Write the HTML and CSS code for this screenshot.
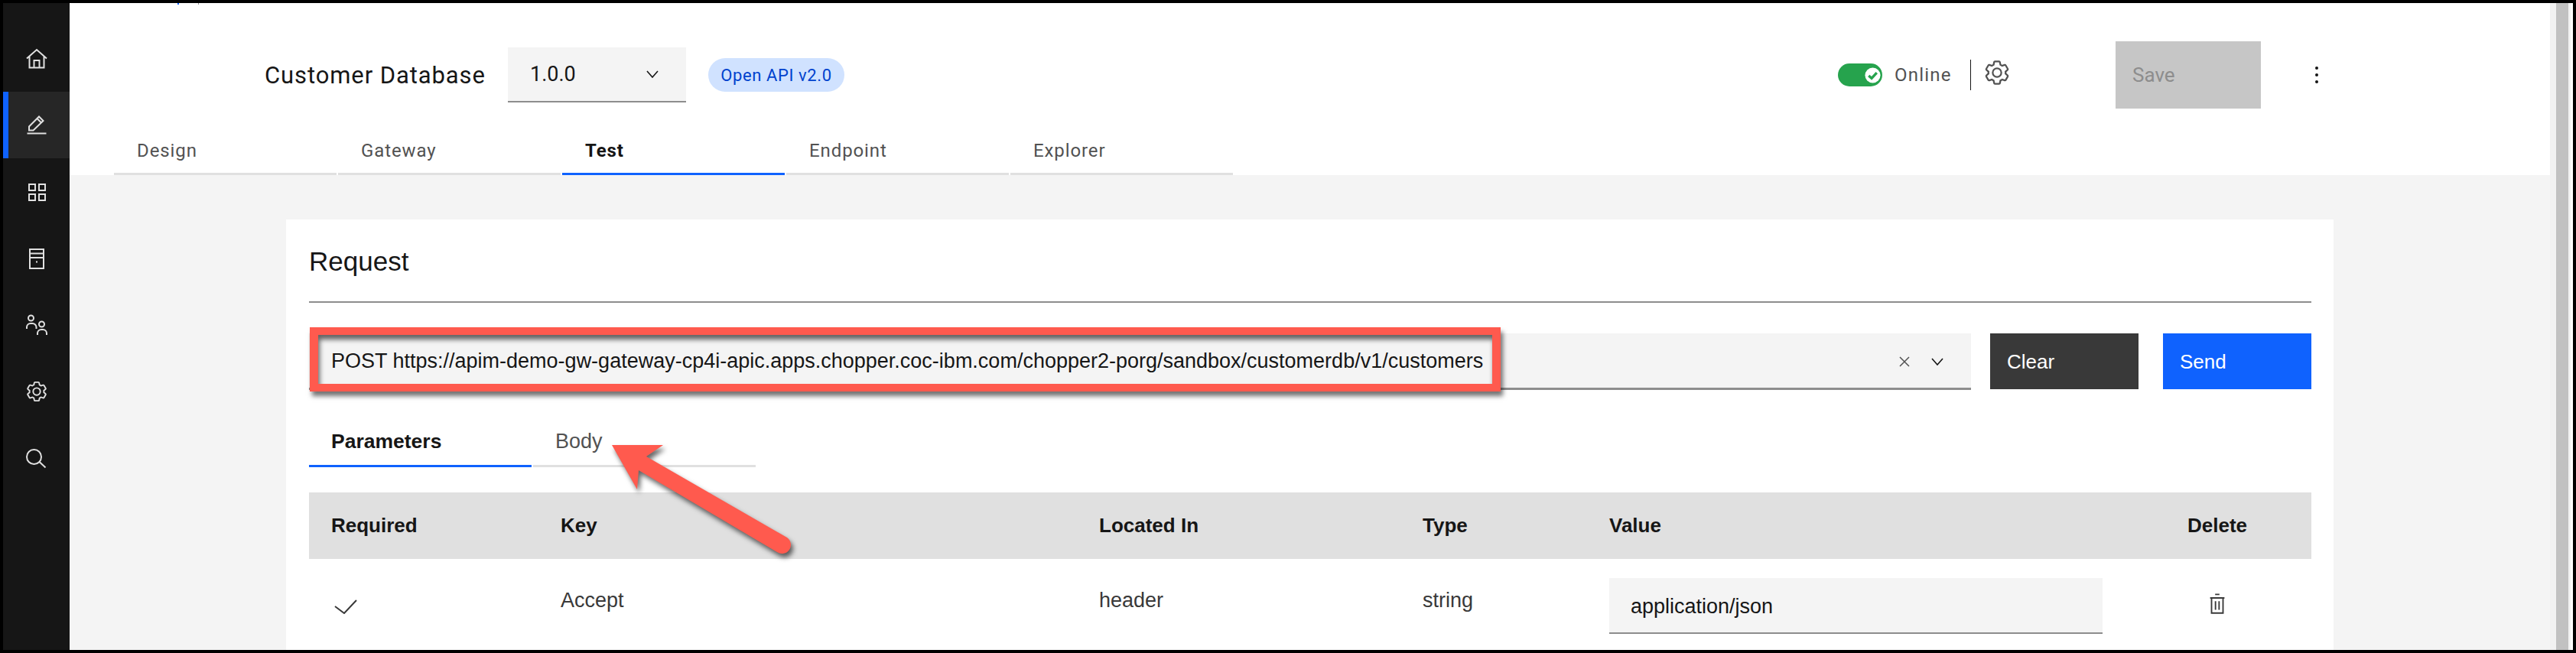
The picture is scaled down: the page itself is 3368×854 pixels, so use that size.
FILE: index.html
```html
<!DOCTYPE html>
<html lang="en">
<head>
  <meta charset="UTF-8" />
  <title>Customer Database</title>
  <link rel="stylesheet" href="styles.css">
</head>
<body>

  <svg class="defs" width="0" height="0">
    <symbol id="gear" viewBox="0 0 32 32">
      <path d="M27,16.76c0-.25,0-.5,0-.76s0-.51,0-.77l1.92-1.68A2,2,0,0,0,29.3,11L26.94,7a2,2,0,0,0-1.73-1,2,2,0,0,0-.64.1l-2.43.82a11.35,11.35,0,0,0-1.31-.75l-.51-2.52a2,2,0,0,0-2-1.61H13.64a2,2,0,0,0-2,1.61l-.51,2.52a11.48,11.48,0,0,0-1.32.75L7.43,6.06A2,2,0,0,0,6.79,6,2,2,0,0,0,5.06,7L2.7,11a2,2,0,0,0,.41,2.51L5,15.24c0,.25,0,.5,0,.76s0,.51,0,.77L3.11,18.45A2,2,0,0,0,2.7,21L5.06,25a2,2,0,0,0,1.73,1,2,2,0,0,0,.64-.1l2.43-.82a11.35,11.35,0,0,0,1.31.75l.51,2.52a2,2,0,0,0,2,1.61h4.72a2,2,0,0,0,2-1.61l.51-2.52a11.48,11.48,0,0,0,1.32-.75l2.42.82a2,2,0,0,0,.64.1,2,2,0,0,0,1.73-1L29.3,21a2,2,0,0,0-.41-2.51ZM25.21,24l-3.43-1.16a8.86,8.86,0,0,1-2.71,1.57L18.36,28H13.64l-.71-3.55a9.36,9.36,0,0,1-2.7-1.57L6.79,24,4.43,20l2.72-2.4a8.9,8.9,0,0,1,0-3.13L4.43,12,6.79,8l3.43,1.16a8.86,8.86,0,0,1,2.71-1.57L13.64,4h4.72l.71,3.55a9.36,9.36,0,0,1,2.7,1.57L25.21,8l2.36,4-2.72,2.4a8.9,8.9,0,0,1,0,3.13L27.57,20Z"/>
      <path d="M16,22a6,6,0,1,1,6-6A5.94,5.94,0,0,1,16,22Zm0-10a3.91,3.91,0,0,0-4,4,3.91,3.91,0,0,0,4,4,3.91,3.91,0,0,0,4-4A3.91,3.91,0,0,0,16,12Z"/>
    </symbol>
  </svg>

  <!-- Left rail -->
  <nav class="rail">
    <div class="rail-item">
      <svg class="rail-icon" viewBox="0 0 32 32"><path d="M3 15.500 16 4l13 11.500M6.500 13v14.500h19V13M12.500 27.500V18h7v9.500"/></svg>
    </div>
    <div class="rail-item active">
      <svg class="rail-icon" viewBox="0 0 32 32"><path d="M3.500 26.500h25M6 22.500v-5L19 4.500l5.500 5.500-13 12.500zM16.500 7l5.500 5.500"/></svg>
    </div>
    <div class="rail-item">
      <svg class="rail-icon" viewBox="0 0 32 32"><path d="M6 6h8v8H6zM19 6h8v8h-8zM6 19h8v8H6zM19 19h8v8h-8z"/></svg>
    </div>
    <div class="rail-item">
      <svg class="rail-icon" viewBox="0 0 32 32"><path d="M7 4h18v25H7zM7 9.500h18M7 15h18M15 20.500h2"/></svg>
    </div>
    <div class="rail-item">
      <svg class="rail-icon" viewBox="0 0 32 32"><circle cx="8.500" cy="7" r="3.500"/><circle cx="22.500" cy="15" r="3.500"/><path d="M3 21v-2a5 5 0 0 1 5-5h2.500a5 5 0 0 1 5 5v2M17 29v-2a5 5 0 0 1 5-5h2a5 5 0 0 1 5 5v2"/></svg>
    </div>
    <div class="rail-item">
      <svg class="gear-rail" viewBox="0 0 32 32"><use href="#gear"/></svg>
    </div>
    <div class="rail-item">
      <svg class="rail-icon" viewBox="0 0 32 32"><circle cx="12.500" cy="14.500" r="9.500"/><path d="m19.500 21 8 7.500"/></svg>
    </div>
  </nav>

  <div class="main">
    <header class="top">
      <div class="crumb-stub"><span class="stub-blue"></span><span class="stub-grey"></span></div>
      <div class="title-row">
        <div class="api-name">Customer Database</div>
        <div class="version">
          <span>1.0.0</span>
          <svg class="chevron" viewBox="0 0 16 10"><path d="M1 1l7 8 7-8"/></svg>
        </div>
        <div class="tag">Open API v2.0</div>
        <div class="status">
          <div class="toggle">
            <svg class="toggle-knob" viewBox="0 0 24 24"><circle cx="12" cy="12" r="10.500"/><path d="M6.500 12.500l4 3.500 7-7.500"/></svg>
          </div>
          <span class="online">Online</span>
          <span class="divider"></span>
          <svg class="gear-top" viewBox="0 0 32 32"><use href="#gear"/></svg>
        </div>
        <button class="save">Save</button>
        <div class="more"><i></i><i></i><i></i></div>
      </div>
      <div class="tabs top-tabs">
        <div class="tab">Design</div>
        <div class="tab">Gateway</div>
        <div class="tab current">Test</div>
        <div class="tab">Endpoint</div>
        <div class="tab">Explorer</div>
      </div>
    </header>

    <section class="content">
      <div class="card">
        <h2 class="card-title">Request</h2>
        <div class="url-row">
          <div class="url-field">
            <span>POST https://apim-demo-gw-gateway-cp4i-apic.apps.chopper.coc-ibm.com/chopper2-porg/sandbox/customerdb/v1/customers</span>
            <svg class="clear-x" viewBox="0 0 16 16"><path d="M2 2l12 12M14 2 2 14"/></svg>
            <svg class="chevron" viewBox="0 0 16 10"><path d="M1 1l7 8 7-8"/></svg>
          </div>
          <button class="btn btn-dark">Clear</button>
          <button class="btn btn-blue">Send</button>
        </div>
        <div class="tabs card-tabs">
          <div class="tab current">Parameters</div>
          <div class="tab">Body</div>
        </div>
        <div class="grid-row grid-head">
          <div>Required</div>
          <div>Key</div>
          <div>Located In</div>
          <div>Type</div>
          <div>Value</div>
          <div>Delete</div>
        </div>
        <div class="grid-row grid-body">
          <div class="cell-check"><svg class="check" viewBox="0 0 30 19"><path d="M1 9l12 9L29 1"/></svg></div>
          <div>Accept</div>
          <div>header</div>
          <div>string</div>
          <div class="value-input">application/json</div>
          <div class="cell-trash">
            <svg class="trash" viewBox="0 0 32 32"><path d="M13 2.500h6M6 7.500h20M8 7.500v21h16v-21M13.500 12v12M18.500 12v12"/></svg>
          </div>
        </div>
      </div>
    </section>
  </div>

  <div class="scroller"></div>

  <!-- Annotation drawn on top of the screenshot -->
  <div class="callout-box"></div>
  <svg class="callout-arrow" viewBox="0 0 260 170">
    <path d="M10 12H77L55 27 239 133a11.500 11.500 0 0 1-13 19L45 45 43 70z"/>
  </svg>

</body>
</html>
```

FILE: styles.css
```css
:root {
  --blue: #0f62fe;
  --rail: #161616;
  --page: #f4f4f4;
  --line: #e0e0e0;
  --under: #8d8d8d;
  --red: #ff5a4e;
}
* {
  box-sizing: border-box;
}
html, body {
  margin: 0;
  height: 100%;
}
body {
  position: relative;
  display: flex;
  height: 100vh;
  padding: 4px;
  overflow: hidden;
  background: #000;
  color: #161616;
  font-family: "Liberation Sans", Arial, sans-serif;
  font-size: 27px;
}
.defs {
  position: absolute;
}

/* rail */
.rail {
  flex: 0 0 87px;
  padding-top: 29px;
  background: var(--rail);
}
.rail-item {
  display: flex;
  align-items: center;
  justify-content: center;
  height: 87px;
}
.rail-item.active {
  background: #262626;
  border-left: 7px solid var(--blue);
  padding-right: 7px;
}
.rail-icon {
  width: 32px;
  height: 32px;
  fill: none;
  stroke: #e0e0e0;
  stroke-width: 2;
}
.gear-rail {
  width: 30px;
  height: 30px;
  fill: #e0e0e0;
}

/* main column */
.main {
  flex: 1;
  display: flex;
  flex-direction: column;
  min-width: 0;
  background: var(--page);
}
.top {
  display: flex;
  flex-direction: column;
  height: 225px;
  background: #fff;
  font-family: Roboto, sans-serif;
  font-size: 24px;
}
.crumb-stub {
  display: flex;
  height: 50px;
  padding-left: 141px;
  gap: 25px;
}
.stub-blue, .stub-grey {
  width: 2px;
  height: 2px;
  background: var(--blue);
}
.stub-grey {
  width: 1px;
  background: #8d8d8d;
}
.title-row {
  display: flex;
  align-items: center;
  height: 88px;
  padding-left: 255px;
}
.api-name {
  width: 318px;
  font-size: 31px;
  letter-spacing: .9px;
  white-space: nowrap;
}
.version {
  display: flex;
  align-items: center;
  justify-content: space-between;
  width: 233px;
  height: 72px;
  padding: 0 36px 0 29px;
  background: var(--page);
  border-bottom: 2px solid var(--under);
  font-size: 27px;
}
.tag {
  display: flex;
  align-items: center;
  justify-content: center;
  width: 178px;
  height: 44px;
  margin-left: 29px;
  border-radius: 22px;
  background: #d0e2ff;
  color: #0043ce;
  font-size: 22px;
  letter-spacing: .6px;
}
.chevron {
  width: 16px;
  height: 10px;
  fill: none;
  stroke: #161616;
  stroke-width: 1.600;
}
.status {
  display: flex;
  align-items: center;
  margin-left: 1299px;
}
.toggle {
  display: flex;
  align-items: center;
  justify-content: flex-end;
  width: 58px;
  height: 30px;
  padding-right: 1px;
  border-radius: 15px;
  background: #26a34d;
}
.toggle-knob {
  width: 23px;
  height: 23px;
}
.toggle-knob circle {
  fill: #fff;
}
.toggle-knob path {
  fill: none;
  stroke: #26a34d;
  stroke-width: 3.500;
}
.online {
  margin-left: 16px;
  width: 99px;
  color: #525252;
  font-size: 24px;
  letter-spacing: 1.200px;
}
.divider {
  width: 1px;
  height: 40px;
  background: #161616;
}
.gear-top {
  width: 36px;
  height: 36px;
  margin-left: 16px;
  margin-bottom: 6px;
  fill: #525252;
}
.save {
  width: 190px;
  height: 88px;
  margin-left: 137px;
  padding: 0 0 0 22px;
  border: 0;
  background: #c6c6c6;
  color: #8d8d8d;
  font: 26px Roboto, sans-serif;
  text-align: left;
}
.more {
  display: flex;
  flex-direction: column;
  gap: 5px;
  margin-left: 71px;
}
.more i {
  width: 4px;
  height: 4px;
  border-radius: 50%;
  background: #161616;
}

/* tabs */
.tabs {
  display: flex;
  gap: 2px;
}
.tab {
  width: 291px;
  padding-left: 30px;
  border-bottom: 3px solid var(--line);
  color: #525252;
}
.tab.current {
  border-bottom-color: var(--blue);
  color: #161616;
  font-weight: 700;
}
.top-tabs {
  margin: auto 0 0 58px;
  letter-spacing: .9px;
}
.top-tabs .tab {
  height: 60px;
  padding-top: 10px;
  line-height: 36px;
}

/* request card */
.content {
  flex: 1;
  min-height: 0;
  padding: 58px 283px 0;
}
.card {
  height: 100%;
  padding: 0 29px 0 30px;
  background: #fff;
}
.card-title {
  height: 109px;
  margin: 0;
  padding-top: 35px;
  border-bottom: 2px solid var(--under);
  font-size: 35px;
  font-weight: 400;
  line-height: 40px;
}
.url-row {
  display: flex;
  margin-top: 40px;
}
.url-field {
  display: flex;
  align-items: center;
  width: 2173px;
  height: 74px;
  padding: 2px 36px 0 29px;
  background: var(--page);
  border-bottom: 3px solid var(--under);
  white-space: nowrap;
}
.clear-x {
  width: 16px;
  height: 16px;
  margin-left: auto;
  margin-right: 27px;
  fill: none;
  stroke: #525252;
  stroke-width: 1.500;
}
.btn {
  width: 194px;
  height: 73px;
  padding: 2px 0 0 22px;
  border: 0;
  color: #fff;
  font: 26px "Liberation Sans", Arial, sans-serif;
  text-align: left;
}
.btn-dark {
  margin-left: 25px;
  background: #393939;
}
.btn-blue {
  margin-left: 32px;
  background: var(--blue);
}
.card-tabs {
  margin-top: 24px;
}
.card-tabs .tab {
  height: 77px;
  padding-top: 25px;
  padding-left: 29px;
  line-height: 36px;
}
.card-tabs .tab.current {
  font-size: 26.500px;
}
.grid-row {
  display: grid;
  grid-template-columns: 329px 704px 423px 244px 756px 1fr;
}
.grid-head {
  align-items: center;
  height: 87px;
  margin-top: 33px;
  background: #e0e0e0;
  font-size: 26px;
  font-weight: 700;
}
.grid-head > :first-child, .cell-check {
  padding-left: 29px;
}
.grid-body {
  padding-top: 25px;
  color: #393939;
  line-height: 58px;
}
.grid-body > div {
  height: 73px;
}
.check {
  display: block;
  width: 30px;
  height: 19px;
  margin: 28px 0 0 4px;
  fill: none;
  stroke: #393939;
  stroke-width: 2;
}
.grid-body .value-input {
  width: 645px;
  padding-left: 28px;
  background: var(--page);
  border-bottom: 2px solid var(--under);
  color: #161616;
  line-height: 74px;
}
.cell-trash {
  padding: 19px 0 0 24px;
}
.trash {
  display: block;
  width: 30px;
  height: 30px;
  fill: none;
  stroke: #393939;
  stroke-width: 2;
}

/* scrollbar */
.scroller {
  flex: 0 0 30px;
  background: linear-gradient(to right, #f1f1f1 8px, #c1c1c1 8px, #c1c1c1 24px, #f1f1f1 24px, #f1f1f1 27px, #fff 27px);
}

/* annotation */
.callout-box {
  position: absolute;
  left: 405px;
  top: 428px;
  width: 1557px;
  height: 84px;
  border: 10px solid var(--red);
  border-left-width: 11px;
  border-right-width: 11px;
  box-shadow: 3px 6px 6px rgba(0, 0, 0, .55), inset 2px 6px 6px rgba(0, 0, 0, .6);
}
.callout-arrow {
  position: absolute;
  left: 790px;
  top: 570px;
  width: 260px;
  height: 170px;
  fill: var(--red);
  filter: drop-shadow(3px 5px 3px rgba(0, 0, 0, .6));
}
```
